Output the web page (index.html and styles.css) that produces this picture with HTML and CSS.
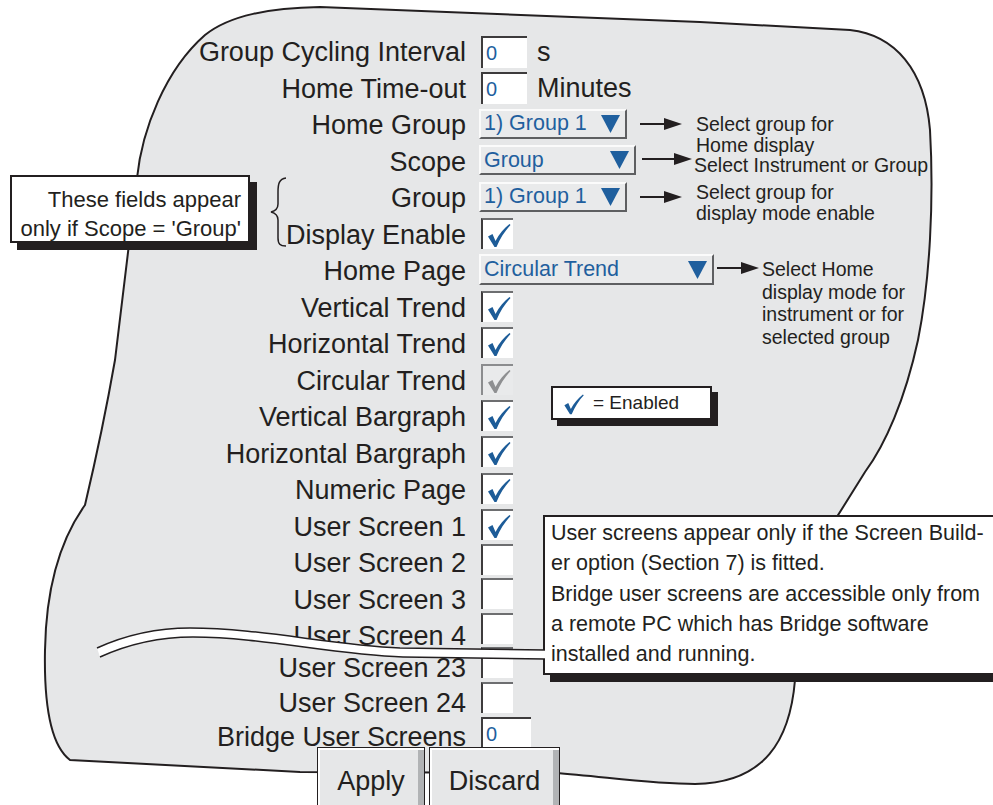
FILE: index.html
```html
<!DOCTYPE html>
<html lang="en">
<head>
    <meta charset="UTF-8">
    <title>Screen configuration</title>
    <link rel="stylesheet" href="styles.css">
</head>
<body>
    <!-- shared check mark -->
    <svg class="defs" width="0" height="0">
        <symbol id="tick" viewBox="0 0 30 29">
            <path d="M5 16.5 L9.5 14 L12.5 21 C16 14 21 8.5 26.5 4 L27.5 5 C22 11 17 18.5 13.5 27 L11.5 27 Z"/>
        </symbol>
        <symbol id="down" viewBox="0 0 19 18">
            <path d="M0 0 H19 L9.5 18 Z"/>
        </symbol>
        <symbol id="pointer" viewBox="0 0 42 14">
            <path d="M0 7 H26" stroke="#231f20" stroke-width="2"/>
            <path d="M24 1 L42 7 L24 13 Z" fill="#231f20"/>
        </symbol>
    </svg>

    <div class="screen">
        <!-- the grey panel outline -->
        <svg class="panel" width="993" height="805">
            <path d="M137 178 C142 130 165 70 205 35 C230 15 270 8 320 7 L700 22 L850 30 C895 35 925 70 930 130 C934 200 930 280 918 340 C905 400 885 445 865 472 L835 520 L795 680 C790 740 765 783 695 784 C650 784 600 776 555 773 L300 772 L70 760 C50 745 44 700 45 650 C46 590 60 540 85 505 C98 450 108 400 115 360 Z"
                  fill="#e6e7e8" stroke="#231f20" stroke-width="2"/>
        </svg>

        <div class="form">
            <div class="labels">
                <div>Group Cycling Interval</div>
                <div>Home Time-out</div>
                <div>Home Group</div>
                <div>Scope</div>
                <div>Group</div>
                <div>Display Enable</div>
                <div>Home Page</div>
                <div>Vertical Trend</div>
                <div>Horizontal Trend</div>
                <div>Circular Trend</div>
                <div>Vertical Bargraph</div>
                <div>Horizontal Bargraph</div>
                <div>Numeric Page</div>
                <div>User Screen 1</div>
                <div>User Screen 2</div>
                <div>User Screen 3</div>
                <div>User Screen 4</div>
                <div class="tight after-break">User Screen 23</div>
                <div class="tight">User Screen 24</div>
                <div class="tight">Bridge User Screens</div>
            </div>

            <div class="controls">
                <div class="ctl">
                    <div class="field">0</div>
                    <span class="unit">s</span>
                </div>
                <div class="ctl">
                    <div class="field">0</div>
                    <span class="unit">Minutes</span>
                </div>
                <div class="ctl">
                    <div class="select w-group">1) Group 1 <svg width="19" height="18"><use href="#down"/></svg></div>
                    <svg class="pointer" width="42" height="14"><use href="#pointer"/></svg>
                    <div class="hint">Select group for<br>Home display</div>
                </div>
                <div class="ctl">
                    <div class="select w-scope">Group <svg width="19" height="18"><use href="#down"/></svg></div>
                    <svg class="pointer pointer-scope" width="50" height="14" viewBox="-8 0 50 14" preserveAspectRatio="none"><path d="M-8 7 H26" stroke="#231f20" stroke-width="2"/><path d="M24 1 L42 7 L24 13 Z" fill="#231f20"/></svg>
                    <div class="hint hint-scope">Select Instrument or Group</div>
                </div>
                <div class="ctl">
                    <div class="select w-group">1) Group 1 <svg width="19" height="18"><use href="#down"/></svg></div>
                    <svg class="pointer" width="42" height="14"><use href="#pointer"/></svg>
                    <div class="hint hint-group">Select group for<br>display mode enable</div>
                </div>
                <div class="ctl"><div class="check"><svg width="30" height="29"><use href="#tick"/></svg></div></div>
                <div class="ctl">
                    <div class="select w-page">Circular Trend <svg width="19" height="18"><use href="#down"/></svg></div>
                    <svg class="pointer pointer-page" width="42" height="14"><use href="#pointer"/></svg>
                    <div class="hint hint-page">Select Home<br>display mode for<br>instrument or for<br>selected group</div>
                </div>
                <div class="ctl"><div class="check"><svg width="30" height="29"><use href="#tick"/></svg></div></div>
                <div class="ctl"><div class="check"><svg width="30" height="29"><use href="#tick"/></svg></div></div>
                <div class="ctl"><div class="check off"><svg width="30" height="29"><use href="#tick"/></svg></div></div>
                <div class="ctl"><div class="check"><svg width="30" height="29"><use href="#tick"/></svg></div></div>
                <div class="ctl"><div class="check"><svg width="30" height="29"><use href="#tick"/></svg></div></div>
                <div class="ctl"><div class="check"><svg width="30" height="29"><use href="#tick"/></svg></div></div>
                <div class="ctl tight"><div class="check"><svg width="30" height="29"><use href="#tick"/></svg></div></div>
                <div class="ctl tight"><div class="check"></div></div>
                <div class="ctl tight"><div class="check"></div></div>
                <div class="ctl tight"><div class="check"></div></div>
                <div class="ctl tight"><div class="check"></div></div>
                <div class="ctl tight"><div class="check"></div></div>
                <div class="ctl tight"><div class="field wide">0</div></div>
            </div>
        </div>

        <div class="buttons">
            <div class="btn btn-apply">Apply</div>
            <div class="btn btn-discard">Discard</div>
        </div>

        <!-- annotations laid over the panel -->
        <div class="note note-scope">These fields appear<br>only if Scope = 'Group'</div>
        <svg class="brace" width="20" height="72">
            <path d="M16 2 C9 3 8 8 8 16 L8 28 C8 33 5 35 1 36 C5 37 8 39 8 44 L8 62 C8 68 10 70 16 70" fill="none" stroke="#231f20" stroke-width="1.5"/>
        </svg>

        <div class="legend">
            <svg width="26" height="25"><use href="#tick"/></svg>
            <span>= Enabled</span>
        </div>

        <div class="note note-user">User screens appear only if the Screen Build-<br>er option (Section 7) is fitted.<br>Bridge user screens are accessible only from<br>a remote PC which has Bridge software<br>installed and running.</div>

        <svg class="break" width="460" height="40" viewBox="90 620 460 40">
            <path d="M97 648 C130 633 160 628 190 628 C260 628 330 645 400 648 L545 650 L545 659 L403 657 C333 655 263 637 193 637 C163 637 133 642 100 657 Z" fill="#fff"/>
            <path d="M97 648 C130 633 160 628 190 628 C260 628 330 645 400 648 L545 650" fill="none" stroke="#231f20" stroke-width="1.5"/>
            <path d="M100 657 C133 642 163 637 193 637 C263 637 333 655 403 657 L545 659" fill="none" stroke="#231f20" stroke-width="1.5"/>
        </svg>
    </div>
</body>
</html>
```

FILE: styles.css
```css
/* page */
body {
    margin: 0;
    background: #fff;
    color: #231f20;
    font-family: "Liberation Sans", Arial, sans-serif;
    overflow: hidden;
}

.defs {
    position: absolute;
}

.screen {
    position: relative;
    width: 993px;
    height: 805px;
    overflow: hidden;
}

.panel {
    position: absolute;
    left: 0;
    top: 0;
}

/* form: labels column + controls column */
.form {
    position: relative;
    display: flex;
    height: 713px;
    padding-top: 34px;
}

.labels {
    width: 466px;
    text-align: right;
    font-size: 27px;
}

.labels div {
    height: 36.5px;
    line-height: 36.5px;
    white-space: nowrap;
}

.labels .tight {
    height: 34.5px;
    line-height: 34.5px;
}

.labels .after-break {
    margin-top: -3.5px;
}

.controls {
    margin-left: 15px;
    padding-top: 2px;
}

.ctl {
    display: flex;
    align-items: flex-start;
    height: 36.4px;
}

.ctl.tight {
    height: 34.6px;
}

/* number fields */
.field {
    box-sizing: border-box;
    width: 46px;
    height: 32px;
    padding-left: 3px;
    background: #fff;
    border-top: 2px solid #3d3b3c;
    border-left: 2px solid #3d3b3c;
    color: #1f5f9e;
    font-size: 20px;
    line-height: 30px;
}

.field.wide {
    width: 50px;
}

.unit {
    margin-left: 10px;
    font-size: 27px;
    line-height: 32px;
}

/* drop downs */
.select {
    box-sizing: border-box;
    display: flex;
    align-items: center;
    justify-content: space-between;
    height: 30px;
    margin-left: -2px;
    padding: 0 5px 0 3px;
    background: #e9eaeb;
    border: 2px solid;
    border-color: #fbfbfb #5e5f61 #5e5f61 #fbfbfb;
    color: #1f5f9e;
    font-size: 21.5px;
    white-space: nowrap;
}

.select svg {
    fill: #1f5f9e;
}

.w-group { width: 148px; }
.w-scope { width: 157px; }
.w-page  { width: 235px; height: 31px; }

.pointer {
    flex: none;
    margin: 8px 0 0 13px;
}

.pointer-scope {
    margin: 7px 0 0 6px;
}

.pointer-page {
    margin: 7px 0 0 3px;
}

.hint {
    margin: 5px 0 0 14px;
    font-size: 19.5px;
    line-height: 21px;
    white-space: nowrap;
}

.hint-scope {
    margin: 9px 0 0 2px;
    line-height: 22px;
}

.hint-group {
    margin-top: 0;
}

.hint-page {
    margin: 4px 0 0 3px;
    line-height: 22.5px;
}

/* check boxes */
.check {
    box-sizing: border-box;
    width: 32px;
    height: 31px;
    background: #fff;
    border-top: 2px solid #6d6e70;
    border-left: 2px solid #3d3b3c;
}

.check svg {
    display: block;
    fill: #1d5c98;
}

.check.off {
    background: #e9eaeb;
    border-color: #8b8c8e;
}

.check.off svg {
    fill: #8e8f91;
}

/* buttons */
.buttons {
    position: relative;
    display: flex;
    gap: 4px;
    margin-left: 317px;
}

.btn {
    box-sizing: border-box;
    height: 62px;
    padding-top: 4px;
    background: #e6e7e8;
    border: 1px solid #231f20;
    box-shadow: inset 2px 2px 0 #fff, inset -6px 0 0 #b1b3b5;
    font-size: 27px;
    line-height: 58px;
    text-align: center;
}

.btn-apply   { width: 108px; }
.btn-discard { width: 131px; }

/* callouts */
.note {
    position: absolute;
    box-sizing: border-box;
    background: #fff;
    border: 2px solid #231f20;
    box-shadow: 7px 7px 0 #231f20;
}

.note-scope {
    left: 10px;
    top: 175px;
    width: 240px;
    height: 68px;
    padding: 8px 7px 0 0;
    text-align: right;
    font-size: 22px;
    line-height: 29px;
}

.note-user {
    left: 543px;
    top: 515px;
    width: 470px;
    height: 160px;
    padding: 1px 0 0 6px;
    font-size: 21.5px;
    line-height: 30.3px;
    white-space: nowrap;
}

.brace {
    position: absolute;
    left: 270px;
    top: 176px;
}

.legend {
    position: absolute;
    left: 551px;
    top: 386px;
    box-sizing: border-box;
    display: flex;
    align-items: center;
    gap: 7px;
    width: 161px;
    height: 34px;
    padding-left: 7px;
    background: #fff;
    border: 2px solid #231f20;
    box-shadow: 6px 6px 0 #231f20;
    font-size: 19px;
}

.legend svg {
    fill: #1d5c98;
}

.break {
    position: absolute;
    left: 90px;
    top: 620px;
}
```
